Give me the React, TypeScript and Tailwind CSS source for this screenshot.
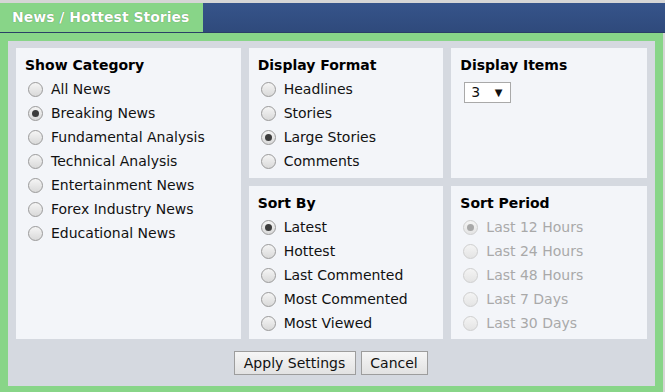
import { ReactNode } from 'react';

const font = { fontFamily: 'Verdana, "DejaVu Sans", sans-serif' };

const Radio = ({ checked, disabled }: { checked?: boolean; disabled?: boolean }) => (
  <span
    className={`flex h-[15px] w-[15px] shrink-0 items-center justify-center rounded-full border ${
      disabled
        ? 'border-[#cfcfcf] bg-gradient-to-b from-[#f4f4f4] to-[#e4e4e4]'
        : 'border-[#9a9a9a] bg-gradient-to-b from-[#f5f5f5] to-[#d9d9d9]'
    }`}
  >
    {checked && (
      <span className={`h-[7px] w-[7px] rounded-full ${disabled ? 'bg-[#a8a8a8]' : 'bg-[#3c3c3c]'}`} />
    )}
  </span>
);

const Option = ({ label, checked, disabled }: { label: string; checked?: boolean; disabled?: boolean }) => (
  <div className="flex h-6 items-center gap-[8px] pl-[3px]">
    <Radio checked={checked} disabled={disabled} />
    <span className={`text-[14px] ${disabled ? 'text-[#a9a9a9]' : 'text-[#111]'}`}>{label}</span>
  </div>
);

const Box = ({ title, children, className = '' }: { title: string; children?: ReactNode; className?: string }) => (
  <div className={`bg-[#f3f5f9] px-[9px] pt-[7px] ${className}`}>
    <h3 className="mb-[2px] h-[20px] text-[14px] font-bold leading-[20px] text-black">{title}</h3>
    {children}
  </div>
);

export default function App() {
  const categories = [
    'All News',
    'Breaking News',
    'Fundamental Analysis',
    'Technical Analysis',
    'Entertainment News',
    'Forex Industry News',
    'Educational News',
  ];

  return (
    <div className="h-[392px] w-[665px] overflow-hidden bg-[#d6d6d6] pt-[3px]" style={font}>
      {/* Title bar */}
      <div className="flex h-[30px] border-b border-[#2a3f66] bg-gradient-to-b from-[#36548a] to-[#2f4a7c]">
        <div className="flex w-[203px] items-center bg-[#88d588] pl-[12px] text-[14px] font-bold text-white [text-shadow:0_0_1px_#4a7a4a]">
          News / Hottest Stories
        </div>
      </div>

      <div className="mr-[2px] h-[359px] bg-[#88d588] px-[8px] pb-[6px] pt-[8px]">
        <div className="flex h-full flex-col bg-[#d5d9e0] px-[8px] pt-[7px]">
          <div className="flex h-[291px] gap-[8px]">
            <Box title="Show Category" className="w-[225px]">
              {categories.map((c) => (
                <Option key={c} label={c} checked={c === 'Breaking News'} />
              ))}
            </Box>

            <div className="flex w-[195px] flex-col gap-[8px]">
              <Box title="Display Format" className="h-[130px]">
                <Option label="Headlines" />
                <Option label="Stories" />
                <Option label="Large Stories" checked />
                <Option label="Comments" />
              </Box>
              <Box title="Sort By" className="flex-1">
                <Option label="Latest" checked />
                <Option label="Hottest" />
                <Option label="Last Commented" />
                <Option label="Most Commented" />
                <Option label="Most Viewed" />
              </Box>
            </div>

            <div className="flex w-[196px] flex-col gap-[8px]">
              <Box title="Display Items" className="h-[130px]">
                <div className="ml-[4px] mt-[7px] flex h-[21px] w-[47px] items-center justify-between border border-[#a9a9a9] bg-white pl-[6px] pr-[8px] text-[14px] text-[#111]">
                  <span>3</span>
                  <span className="text-[10px]">▼</span>
                </div>
              </Box>
              <Box title="Sort Period" className="flex-1">
                <Option label="Last 12 Hours" checked disabled />
                <Option label="Last 24 Hours" disabled />
                <Option label="Last 48 Hours" disabled />
                <Option label="Last 7 Days" disabled />
                <Option label="Last 30 Days" disabled />
              </Box>
            </div>
          </div>

          <div className="mt-[12px] flex justify-center gap-[5px] pr-[2px]">
            <button className="h-[24px] w-[122px] border border-[#9d9d9d] bg-gradient-to-b from-[#f6f6f6] to-[#e2e2e2] text-[14px] text-[#111]">
              Apply Settings
            </button>
            <button className="h-[24px] w-[67px] border border-[#9d9d9d] bg-gradient-to-b from-[#f6f6f6] to-[#e2e2e2] text-[14px] text-[#111]">
              Cancel
            </button>
          </div>
        </div>
      </div>
    </div>
  );
}
